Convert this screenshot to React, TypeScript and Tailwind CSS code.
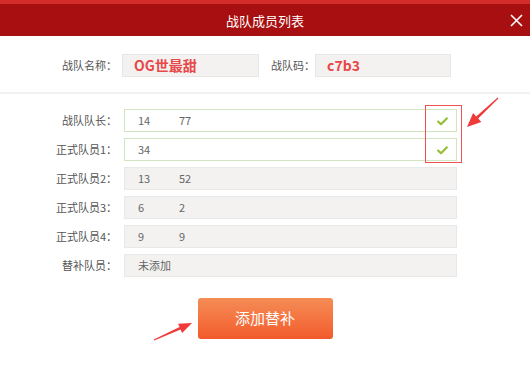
import React from "react";

const font = { fontFamily: '"Noto Sans CJK SC", "Noto Sans", sans-serif' };

function Check() {
  return (
    <svg width="13" height="10" viewBox="0 0 13 10">
      <path d="M1.5 5 L5 8.2 L11.5 1.8" stroke="#94bf34" strokeWidth="2.2" fill="none" strokeLinejoin="round" />
    </svg>
  );
}

type Row = { label: string; a: string; b?: string; active?: boolean };

const rows: Row[] = [
  { label: "战队队长：", a: "14", b: "77", active: true },
  { label: "正式队员1：", a: "34", active: true },
  { label: "正式队员2：", a: "13", b: "52" },
  { label: "正式队员3：", a: "6", b: "2" },
  { label: "正式队员4：", a: "9", b: "9" },
  { label: "替补队员：", a: "未添加" },
];

export default function App() {
  return (
    <div className="relative w-[530px] h-[373px] bg-white overflow-hidden" style={font}>
      <div className="h-[4px] bg-[#d42b2b]" />
      <div className="h-[32px] bg-[#a80f10] grid grid-cols-[40px_1fr_40px] items-center">
        <div />
        <div className="text-center text-white text-[13px] leading-none">战队成员列表</div>
        <div className="flex justify-center pl-[12px]">
          <svg width="13" height="13" viewBox="0 0 13 13">
            <path d="M1 1 L12 12 M12 1 L1 12" stroke="#fff" strokeWidth="1.6" />
          </svg>
        </div>
      </div>

      <div className="mt-[18px] flex items-center h-[23px]">
        <div className="w-[117px] text-right text-[11px] text-[#555] whitespace-nowrap">战队名称：</div>
        <div className="ml-[5px] w-[137px] h-[23px] bg-[#f3f2f1] border border-[#e6e6e6] flex items-center pl-[11px] text-[14px] font-bold text-[#e84848]">
          OG世最甜
        </div>
        <div className="ml-[12px] w-[44px] shrink-0 whitespace-nowrap text-[11px] text-[#555]">战队码：</div>
        <div className="w-[136px] h-[23px] bg-[#f3f2f1] border border-[#e6e6e6] flex items-center pl-[11px] text-[14px] font-bold text-[#e84848]">
          c7b3
        </div>
      </div>

      <div className="mt-[15px] h-[2px] bg-[#f2f2f2]" />

      <div className="mt-[15px] flex flex-col gap-[6px]">
        {rows.map((r) => (
          <div key={r.label} className="flex items-center h-[23px]">
            <div className="w-[117px] text-right text-[11px] text-[#555] whitespace-nowrap">{r.label}</div>
            <div
              className={
                "ml-[7px] w-[333px] h-[23px] border flex items-center pl-[13px] pr-[7px] text-[11px] text-[#666] " +
                (r.active ? "bg-white border-[#d2e5c3]" : "bg-[#f3f2f1] border-[#e8e8e8]")
              }
            >
              <span className="w-[41px]">{r.a}</span>
              {r.b && <span>{r.b}</span>}
              <span className="flex-1" />
              {r.active && <Check />}
            </div>
          </div>
        ))}
      </div>

      <div className="mt-[21px] flex justify-center">
        <button className="w-[135px] h-[41px] rounded-[3px] bg-gradient-to-b from-[#f58c55] to-[#f25a2b] text-white text-[15px]">
          添加替补
        </button>
      </div>

      <div className="absolute left-[425px] top-[105px] w-[37px] h-[58px] border border-[#f05050]" />
      <svg className="absolute left-0 top-0 pointer-events-none" width="530" height="373">
        <polygon
          points="498.4,98.4 478.2,118.6 481.3,121.9 467,127 473.1,113.1 476.2,116.4 497.7,97.6"
          fill="#f03a3a"
        />
        <polygon
          points="154.2,340.5 180.6,329.5 182.1,332.9 192,323 178.1,323.7 179.6,327.1 153.8,339.5"
          fill="#f03a3a"
        />
      </svg>
    </div>
  );
}
